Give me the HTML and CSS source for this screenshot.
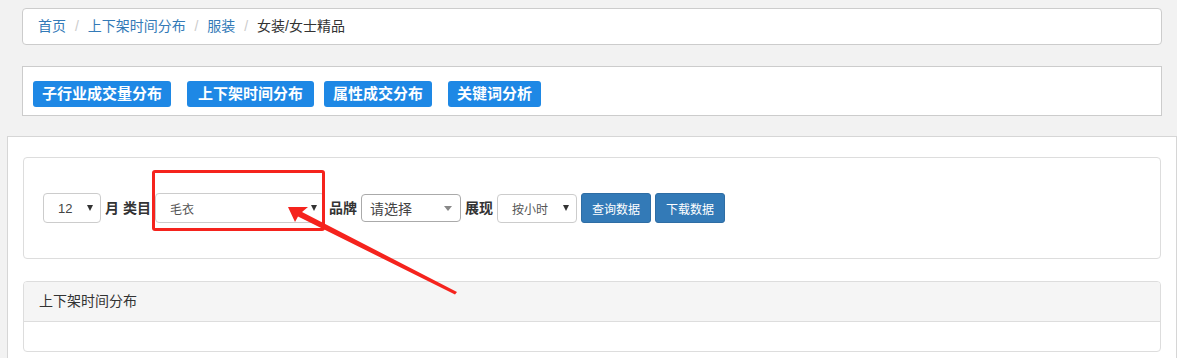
FILE: index.html
```html
<!DOCTYPE html>
<html lang="zh-CN">
<head>
<meta charset="UTF-8">
<title>上下架时间分布</title>
<link rel="stylesheet" href="styles.css">
</head>
<body>
<div class="breadcrumb-box">
    <ol class="breadcrumb">
        <li><a href="#">首页</a></li>
        <li><a href="#">上下架时间分布</a></li>
        <li><a href="#">服装</a></li>
        <li class="active">女装/女士精品</li>
    </ol>
</div>
<div class="tab-box">
    <a href="#" class="tab-btn">子行业成交量分布</a>
    <a href="#" class="tab-btn tab-mid tight">上下架时间分布</a>
    <a href="#" class="tab-btn">属性成交分布</a>
    <a href="#" class="tab-btn">关键词分析</a>
</div>
<div class="main-panel">
    <div class="filter-box">
        <div class="filter-row">
            <div class="select select-month"><span class="num">12</span><i class="caret"></i></div>
            <label>月</label>
            <label>类目</label>
            <div class="highlight">
                <div class="select select-cat"><span>毛衣</span><i class="caret"></i></div>
            </div>
            <label>品牌</label>
            <div class="select select-brand"><span>请选择</span><i class="caret caret-grey"></i></div>
            <label>展现</label>
            <div class="select select-show"><span>按小时</span><i class="caret"></i></div>
            <button type="button" class="btn-query">查询数据</button>
            <button type="button" class="btn-query">下载数据</button>
        </div>
    </div>
    <div class="data-panel">
        <div class="panel-heading">上下架时间分布</div>
        <div class="panel-body"></div>
    </div>
</div>
<svg class="note-arrow" width="1177" height="358" viewBox="0 0 1177 358">
    <polygon points="288,207 308,207 302,212 457,292 455,294.5 298,216.5 295,222" fill="#f5231d"/>
</svg>
</body>
</html>
```

FILE: styles.css
```css
body {
    margin: 0;
    background-color: #f2f2f2;
    font-family: "Liberation Sans", "Noto Sans CJK SC", sans-serif;
    color: #333;
    overflow: hidden;
}
.breadcrumb-box {
    width: 1140px;
    margin: 8px 0 0 22px;
    box-sizing: border-box;
    background-color: #fff;
    border: 1px solid #ccc;
    border-radius: 4px;
}
.breadcrumb {
    margin: 0;
    padding: 8px 15px;
    list-style: none;
    font-size: 14px;
    line-height: 19px;
}
.breadcrumb li {
    display: inline;
}
.breadcrumb li + li::before {
    content: "/\00a0";
    padding: 0 5px;
    color: #ccc;
}
.breadcrumb a {
    color: #337ab7;
    text-decoration: none;
}
.breadcrumb .active {
    color: #333;
}
.tab-box {
    display: flex;
    width: 1140px;
    height: 50px;
    margin: 21px 0 0 22px;
    padding: 14px 10px 0;
    box-sizing: border-box;
    background-color: #fff;
    border: 1px solid #ccc;
}
.tab-btn {
    display: block;
    height: 26px;
    line-height: 26px;
    padding: 0 9px;
    margin-right: 16px;
    background-color: #1e88e5;
    color: #fff;
    font-size: 15px;
    font-weight: bold;
    text-decoration: none;
    border-radius: 3px;
}
.tab-btn.tab-mid {
    padding: 0 11px;
}
.tab-btn.tight {
    margin-right: 10px;
}
.main-panel {
    width: 1170px;
    margin: 20px 0 0 7px;
    padding: 20px 15px;
    box-sizing: border-box;
    background-color: #fff;
    border: 1px solid #d6d6d6;
    min-height: 300px;
}
.filter-box {
    border: 1px solid #ddd;
    border-radius: 4px;
    padding: 35px 19px;
}
.filter-row {
    display: flex;
    align-items: center;
    gap: 4px;
    height: 30px;
}
.filter-row label {
    font-size: 14px;
    font-weight: bold;
    line-height: 20px;
    color: #333;
}
.select {
    display: flex;
    align-items: center;
    justify-content: space-between;
    box-sizing: border-box;
    height: 30px;
    background-color: #fff;
    border: 1px solid #ccc;
    border-radius: 4px;
    font-size: 12px;
    color: #555;
    padding: 0 7px 0 14px;
}
.select .num {
    font-size: 13px;
    color: #444;
}
.select-month {
    width: 58px;
}
.select-cat {
    width: 170px;
}
.select-brand {
    width: 100px;
    height: 28px;
    border-color: #aaa;
    padding-left: 8px;
    padding-right: 8px;
    font-size: 14px;
    color: #444;
}
.select-show {
    width: 80px;
    height: 29px;
}
.caret {
    width: 0;
    height: 0;
    border-left: 3.5px solid transparent;
    border-right: 3.5px solid transparent;
    border-top: 6px solid #333;
}
.caret-grey {
    border-top-color: #888;
    border-left-width: 4px;
    border-right-width: 4px;
    border-top-width: 5px;
}
.highlight {
    position: relative;
}
.highlight::after {
    content: "";
    position: absolute;
    left: -3px;
    right: 0;
    top: -23px;
    bottom: -8px;
    border: 3px solid #f5231d;
    border-radius: 3px;
}
.btn-query {
    width: 70px;
    height: 30px;
    padding: 0;
    background-color: #337ab7;
    border: 1px solid #2e6da4;
    border-radius: 3px;
    color: #fff;
    font-family: inherit;
    font-size: 12px;
}
.data-panel {
    margin-top: 22px;
    border: 1px solid #ddd;
    border-radius: 4px;
}
.panel-heading {
    padding: 10px 15px;
    line-height: 19px;
    font-size: 14px;
    background-color: #f5f5f5;
    border-bottom: 1px solid #ddd;
    border-radius: 3px 3px 0 0;
}
.panel-body {
    height: 29px;
}
.note-arrow {
    position: absolute;
    left: 0;
    top: 0;
    pointer-events: none;
}
```
